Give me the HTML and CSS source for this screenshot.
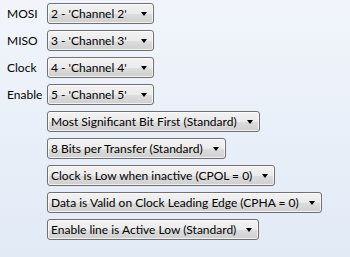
FILE: index.html
```html
<!DOCTYPE html>
<html>
<head>
<meta charset="utf-8">
<link rel="stylesheet" href="styles.css">
</head>
<body>
<div class="panel">
  <div class="pins">
    <span class="label">MOSI</span>
    <div class="combo combo-fixed"><span class="text">2 - 'Channel 2'</span><span class="arrow"></span></div>
    <span class="label">MISO</span>
    <div class="combo combo-fixed"><span class="text">3 - 'Channel 3'</span><span class="arrow"></span></div>
    <span class="label">Clock</span>
    <div class="combo combo-fixed"><span class="text">4 - 'Channel 4'</span><span class="arrow"></span></div>
    <span class="label">Enable</span>
    <div class="combo combo-fixed"><span class="text">5 - 'Channel 5'</span><span class="arrow"></span></div>
  </div>
  <div class="options">
    <div class="combo"><span class="text">Most Significant Bit First (Standard)</span><span class="arrow"></span></div>
    <div class="combo"><span class="text">8 Bits per Transfer (Standard)</span><span class="arrow"></span></div>
    <div class="combo"><span class="text">Clock is Low when inactive (CPOL = 0)</span><span class="arrow"></span></div>
    <div class="combo"><span class="text">Data is Valid on Clock Leading Edge (CPHA = 0)</span><span class="arrow"></span></div>
    <div class="combo"><span class="text">Enable line is Active Low (Standard)</span><span class="arrow"></span></div>
  </div>
</div>
</body>
</html>
```
FILE: styles.css
```css
html, body {
  margin: 0;
  height: 100%;
}
body {
  background: linear-gradient(to bottom, #f1f5fb 0%, #e2eaf6 100%);
  font-family: Lato, "Noto Sans", sans-serif;
  font-size: 12px;
  color: #000;
}
.panel {
  padding: 3px 0 0 7px;
  display: flex;
  flex-direction: column;
  gap: 6px;
  align-items: flex-start;
}
.pins {
  display: grid;
  grid-template-columns: 40px auto;
  row-gap: 6px;
  align-items: center;
}
.label {
  line-height: 21px;
}
.options {
  display: flex;
  flex-direction: column;
  gap: 6px;
  align-items: flex-start;
  margin-left: 40px;
}
.combo {
  box-sizing: border-box;
  height: 21px;
  display: inline-flex;
  align-items: center;
  border: 1px solid #707070;
  border-radius: 3px;
  background: linear-gradient(to bottom, #f2f2f2 0%, #ebebeb 50%, #dddddd 51%, #cfcfcf 100%);
  box-shadow: inset 0 0 0 1px rgba(255,255,255,0.7);
  padding: 0 6px 0 3px;
  white-space: nowrap;
}
.combo-fixed {
  width: 107px;
  justify-content: space-between;
}
.text {
  line-height: 19px;
}
.arrow {
  width: 0;
  height: 0;
  border-left: 3.5px solid transparent;
  border-right: 3.5px solid transparent;
  border-top: 4px solid #000;
  margin-left: 10px;
  flex: none;
}
```
